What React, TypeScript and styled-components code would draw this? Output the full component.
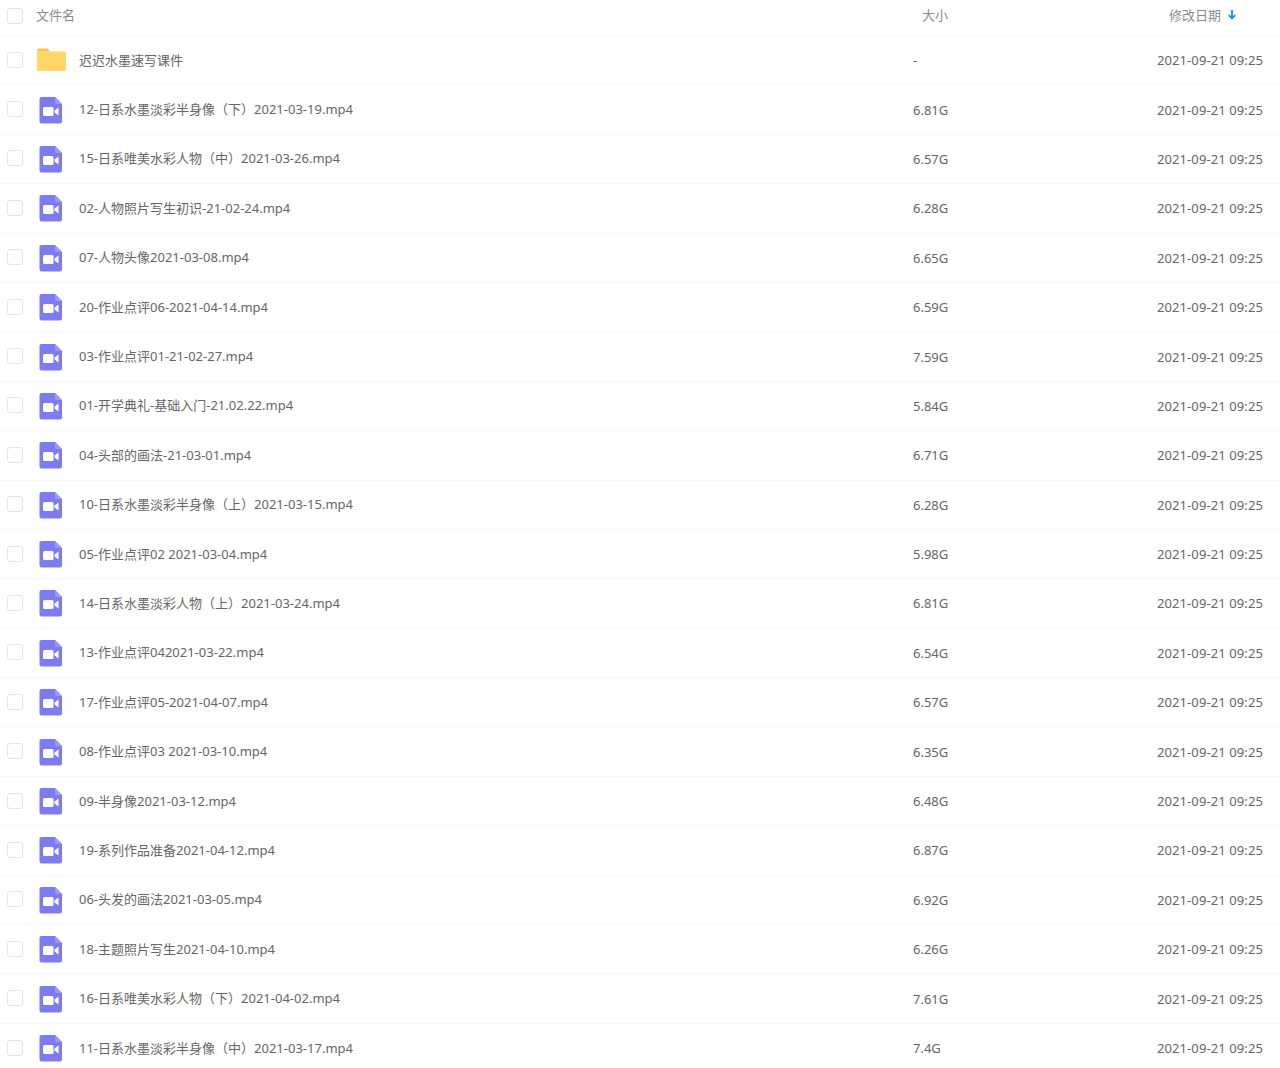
import React from "react";
import styled, { createGlobalStyle } from "styled-components";

const GlobalStyle = createGlobalStyle`
  html, body {
    margin: 0;
    padding: 0;
    background: #fff;
  }
  body {
    font-family: "Noto Sans", "Noto Sans CJK SC", sans-serif;
    font-size: 13px;
    overflow: hidden;
  }
`;

const Table = styled.div`
  width: 1280px;
  height: 1068px;
  overflow: hidden;
`;

const HeaderRow = styled.div`
  display: grid;
  grid-template-columns: 36px 1fr 160px 207px;
  align-items: center;
  height: 36px;
  border-bottom: 1px solid #f7f7f7;
  box-sizing: border-box;
  color: #8c8c8c;
  padding-bottom: 7px;
`;

const Row = styled.div`
  display: grid;
  grid-template-columns: 36px 1fr 160px 207px;
  align-items: center;
  height: 49.4px;
  border-bottom: 1px solid #f7f7f7;
  box-sizing: border-box;
  color: #666;
`;

const Check = styled.span<{ $head?: boolean }>`
  display: block;
  width: 14px;
  height: 14px;
  margin-left: 7px;
  margin-top: ${({ $head }) => ($head ? "4px" : "-1px")};
  border: 1px solid #e4e4e4;
  border-radius: 3px;
  background: #fff;
`;

const NameCell = styled.div`
  display: flex;
  align-items: center;
  min-width: 0;
`;

const IconBox = styled.span<{ $video?: boolean }>`
  display: flex;
  justify-content: center;
  width: 31px;
  margin-right: 12px;
  flex-shrink: 0;
  padding-right: ${({ $video }) => ($video ? "2px" : "0")};
  box-sizing: border-box;
`;

const NameText = styled.span`
  margin-bottom: 2px;
`;

const SizeCell = styled.div<{ $head?: boolean }>`
  padding-left: ${({ $head }) => ($head ? "9px" : "0")};
`;

const DateCell = styled.div`
  text-align: right;
  padding-right: 17px;
  white-space: nowrap;
  letter-spacing: 0.1px;
`;

const DateHead = styled.div`
  display: flex;
  align-items: center;
  gap: 6px;
  padding-left: 96px;
`;

function FolderIcon() {
  return (
    <svg width="31" height="26" viewBox="0 0 31 26">
      <path d="M1 3.5a2 2 0 0 1 2-2h7.5c1 0 1.6.4 2.2 1.2L14 4.5H1z" fill="#f5c24a" />
      <path d="M1 4.5h27.5a1.5 1.5 0 0 1 1.5 1.5v16.5a1.5 1.5 0 0 1-1.5 1.5H2.5A1.5 1.5 0 0 1 1 22.5z" fill="#ffd768" />
    </svg>
  );
}

function VideoIcon() {
  return (
    <svg width="24" height="28" viewBox="0 0 24 28">
      <path d="M2.5 1H16l7 7v17.5a2 2 0 0 1-2 2H2.5a2 2 0 0 1-2-2V3a2 2 0 0 1 2-2z" fill="#7c7cf0" />
      <path d="M16 1l7 7h-5.5A1.5 1.5 0 0 1 16 6.5z" fill="#9a9af6" />
      <rect x="4" y="11" width="10.5" height="9" rx="1.5" fill="#fff" />
      <path d="M15.5 14.5l4-3v8l-4-3z" fill="#fff" />
    </svg>
  );
}

function ArrowDown() {
  return (
    <svg width="10" height="11" viewBox="0 0 10 11">
      <path d="M5 1v8.5M1.8 6.2L5 9.5l3.2-3.3" fill="none" stroke="#1296ff" strokeWidth="1.8" />
    </svg>
  );
}

const files = [
  ["12-日系水墨淡彩半身像（下）2021-03-19.mp4", "6.81G"],
  ["15-日系唯美水彩人物（中）2021-03-26.mp4", "6.57G"],
  ["02-人物照片写生初识-21-02-24.mp4", "6.28G"],
  ["07-人物头像2021-03-08.mp4", "6.65G"],
  ["20-作业点评06-2021-04-14.mp4", "6.59G"],
  ["03-作业点评01-21-02-27.mp4", "7.59G"],
  ["01-开学典礼-基础入门-21.02.22.mp4", "5.84G"],
  ["04-头部的画法-21-03-01.mp4", "6.71G"],
  ["10-日系水墨淡彩半身像（上）2021-03-15.mp4", "6.28G"],
  ["05-作业点评02 2021-03-04.mp4", "5.98G"],
  ["14-日系水墨淡彩人物（上）2021-03-24.mp4", "6.81G"],
  ["13-作业点评042021-03-22.mp4", "6.54G"],
  ["17-作业点评05-2021-04-07.mp4", "6.57G"],
  ["08-作业点评03 2021-03-10.mp4", "6.35G"],
  ["09-半身像2021-03-12.mp4", "6.48G"],
  ["19-系列作品准备2021-04-12.mp4", "6.87G"],
  ["06-头发的画法2021-03-05.mp4", "6.92G"],
  ["18-主题照片写生2021-04-10.mp4", "6.26G"],
  ["16-日系唯美水彩人物（下）2021-04-02.mp4", "7.61G"],
  ["11-日系水墨淡彩半身像（中）2021-03-17.mp4", "7.4G"],
];

const modified = "2021-09-21 09:25";

export default function App() {
  return (
    <Table>
      <GlobalStyle />
      <HeaderRow>
        <Check $head />
        <div>文件名</div>
        <SizeCell $head>大小</SizeCell>
        <DateHead>
          修改日期 <ArrowDown />
        </DateHead>
      </HeaderRow>
      <Row>
        <Check />
        <NameCell>
          <IconBox>
            <FolderIcon />
          </IconBox>
          <NameText>迟迟水墨速写课件</NameText>
        </NameCell>
        <SizeCell>-</SizeCell>
        <DateCell>{modified}</DateCell>
      </Row>
      {files.map(([name, size]) => (
        <Row key={name}>
          <Check />
          <NameCell>
            <IconBox $video>
              <VideoIcon />
            </IconBox>
            <NameText>{name}</NameText>
          </NameCell>
          <SizeCell>{size}</SizeCell>
          <DateCell>{modified}</DateCell>
        </Row>
      ))}
    </Table>
  );
}
